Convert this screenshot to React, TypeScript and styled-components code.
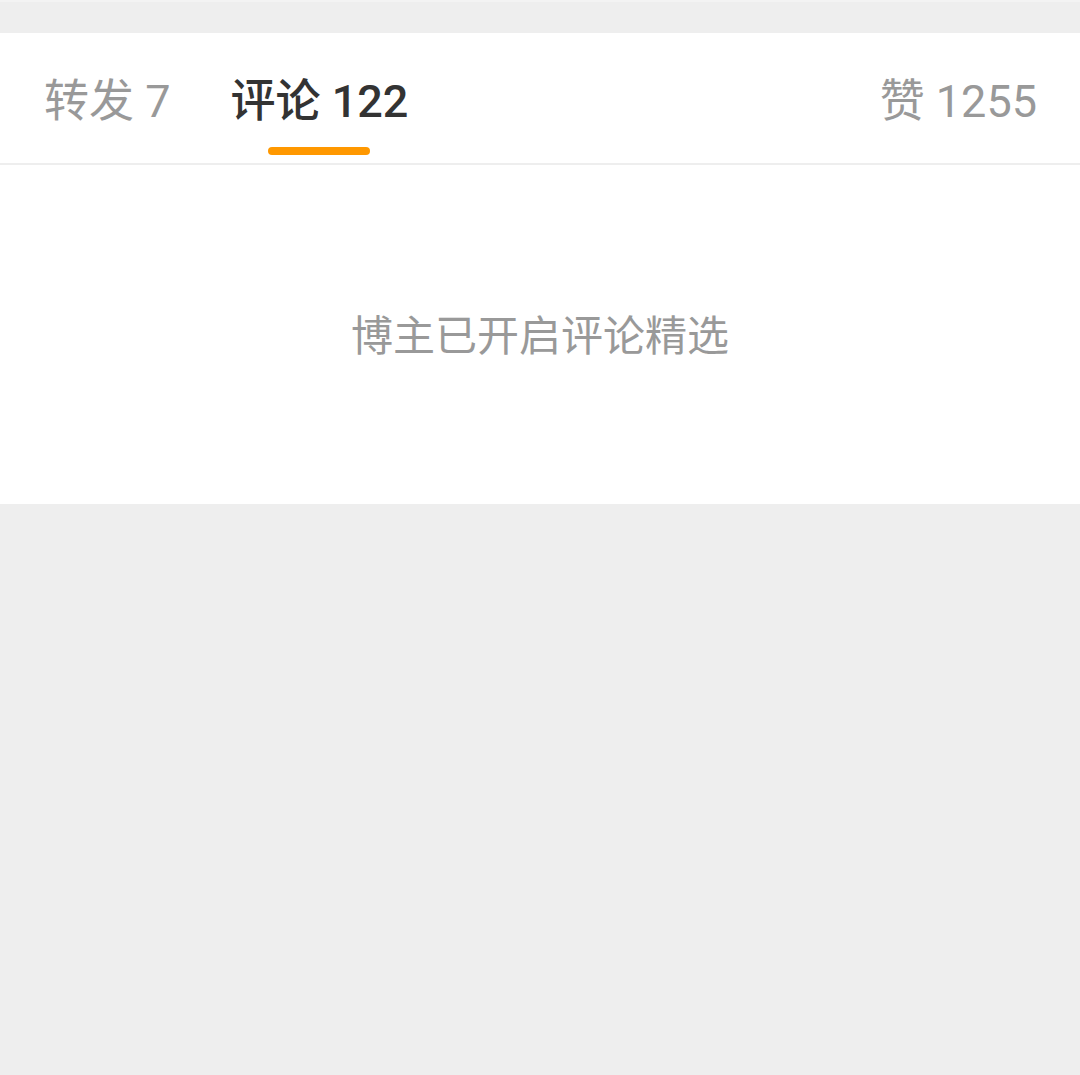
import React from "react";
import styled, { createGlobalStyle } from "styled-components";

const Global = createGlobalStyle`
  html, body { margin: 0; padding: 0; background: #eeeeee; }
  body { font-family: Roboto, "Noto Sans CJK SC", "Noto Sans", sans-serif; }
`;

const Page = styled.div`
  min-height: 1075px;
  background: #eeeeee;
  border-top: 2px solid #f3f3f3;
  box-sizing: border-box;
  padding-top: 31px;
`;

const Panel = styled.section`
  background: #ffffff;
`;

const TabBar = styled.nav`
  display: flex;
  align-items: flex-start;
  height: 132px;
  box-sizing: border-box;
  padding: 0 43px 0 44px;
  border-bottom: 2px solid #eeeeee;
  gap: 60px;
`;

const Tab = styled.div<{ $right?: boolean }>`
  display: flex;
  flex-direction: column;
  align-items: center;
  padding-top: 43px;
  margin-left: ${(p) => (p.$right ? "auto" : "0")};
`;

const TabLabel = styled.span<{ $active?: boolean }>`
  font-size: 45px;
  line-height: 52px;
  white-space: nowrap;
  color: ${(p) => (p.$active ? "#333333" : "#999999")};
  font-weight: ${(p) => (p.$active ? 500 : 400)};
`;

const Underline = styled.span<{ $active?: boolean }>`
  margin-top: 19px;
  width: 102px;
  height: 8px;
  border-radius: 4px;
  background: ${(p) => (p.$active ? "#ff9800" : "transparent")};
`;

const Empty = styled.div`
  height: 339px;
  display: flex;
  align-items: center;
  justify-content: center;
  padding-top: 4px;
  box-sizing: border-box;
`;

const EmptyText = styled.span`
  font-size: 42px;
  color: #999999;
  line-height: 1;
`;

const tabs = [
  { label: "转发 7" },
  { label: "评论 122", active: true },
  { label: "赞 1255", right: true },
];

export default function App() {
  return (
    <>
      <Global />
      <Page>
        <Panel>
          <TabBar>
            {tabs.map((t) => (
              <Tab key={t.label} $right={t.right}>
                <TabLabel $active={t.active}>{t.label}</TabLabel>
                <Underline $active={t.active} />
              </Tab>
            ))}
          </TabBar>
          <Empty>
            <EmptyText>博主已开启评论精选</EmptyText>
          </Empty>
        </Panel>
      </Page>
    </>
  );
}
